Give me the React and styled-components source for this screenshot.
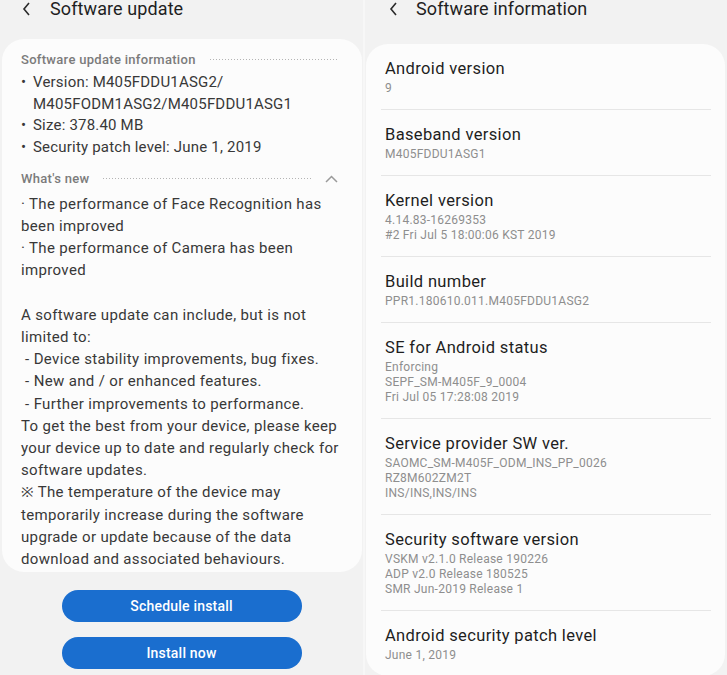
import styled, { createGlobalStyle } from "styled-components"

const GlobalStyle = createGlobalStyle`
  html, body {
    margin: 0;
    padding: 0;
    background: #f1f1f1;
    font-family: Roboto, "Noto Sans", "Liberation Sans", sans-serif;
  }
`

const Page = styled.main`
  display: grid;
  grid-template-columns: 363px 1fr;
  gap: 2px;
  width: 727px;
  height: 675px;
  overflow: hidden;
  background: #f7f7f7;
`

const Panel = styled.section`
  display: flex;
  flex-direction: column;
  background: #f2f2f2;
  overflow: hidden;
`

const Header = styled.header`
  display: flex;
  align-items: center;
  height: 18px;
  padding-left: ${(p) => p.$pad}px;
  gap: ${(p) => p.$gap}px;
  font-size: 18px;
  color: #1f1f1f;
  line-height: 18px;
  letter-spacing: 0.1px;
`

const BackIcon = () => (
  <svg width="9" height="14" viewBox="0 0 9 14">
    <polyline points="7,1 2,7 7,13" fill="none" stroke="#2a2a2a" strokeWidth="1.6" />
  </svg>
)

const UpdateCard = styled.div`
  margin: 21px 1px 0 2px;
  background: #fcfcfc;
  border-radius: 22px;
  padding: 10px 24px 2px 19px;
  color: #383838;
`

const SectionHead = styled.div`
  display: flex;
  align-items: center;
  gap: 14px;
  height: 20px;
  font-size: 13px;
  font-weight: 500;
  letter-spacing: 0.3px;
  color: #7b7b7b;
  margin-top: ${(p) => p.$top || 0}px;
`

const Dots = styled.span`
  flex: 1;
  height: 1px;
  background-image: linear-gradient(to right, #b4b4b4 1px, transparent 1px);
  background-size: 3px 1px;
  background-repeat: repeat-x;
`

const Chevron = () => (
  <svg width="13" height="8" viewBox="0 0 13 8">
    <polyline points="1,7 6.5,1.5 12,7" fill="none" stroke="#9a9a9a" strokeWidth="1.5" />
  </svg>
)

const BulletList = styled.ul`
  list-style: none;
  margin: 3px 0 0;
  padding: 0;
  font-size: 15px;
  line-height: 21.7px;
  letter-spacing: 0.2px;

  li {
    display: flex;
    gap: 6px;
  }
  li::before {
    content: "•";
    width: 6px;
  }
`

const Body = styled.div`
  margin: 4px -20px 0 0;
  font-size: 15px;
  line-height: 22.2px;
  letter-spacing: 0.35px;
  white-space: pre;
`

const Buttons = styled.div`
  display: flex;
  flex-direction: column;
  align-items: center;
  gap: 15px;
  margin-top: 18px;
`

const Pill = styled.button`
  width: 240px;
  height: 32px;
  border: none;
  border-radius: 16px;
  background: #1a6ecf;
  color: #fff;
  font-family: inherit;
  font-size: 14px;
  font-weight: 500;
  letter-spacing: 0.2px;
`

const InfoCard = styled.div`
  margin: 26px 2px 0 1px;
  background: #fcfcfc;
  border-radius: 22px;
  padding: 0 14px 0 15px;
  flex: 1;
`

const Row = styled.div`
  padding: 13px 4px 13px;
  border-bottom: ${(p) => (p.$last ? "none" : "1px solid #e6e6e6")};
`

const Title = styled.div`
  font-size: 16.5px;
  line-height: 24px;
  letter-spacing: 0.35px;
  color: #1e1e1e;
`

const Sub = styled.div`
  font-size: 12px;
  line-height: 15px;
  letter-spacing: 0.25px;
  color: #8e8e8e;
`

const info = [
  ["Android version", ["9"]],
  ["Baseband version", ["M405FDDU1ASG1"]],
  ["Kernel version", ["4.14.83-16269353", "#2 Fri Jul 5 18:00:06 KST 2019"]],
  ["Build number", ["PPR1.180610.011.M405FDDU1ASG2"]],
  ["SE for Android status", ["Enforcing", "SEPF_SM-M405F_9_0004", "Fri Jul 05 17:28:08 2019"]],
  ["Service provider SW ver.", ["SAOMC_SM-M405F_ODM_INS_PP_0026", "RZ8M602ZM2T", "INS/INS,INS/INS"]],
  ["Security software version", ["VSKM v2.1.0 Release 190226", "ADP v2.0 Release 180525", "SMR Jun-2019 Release 1"]],
  ["Android security patch level", ["June 1, 2019"]],
]

const whatsNew = `· The performance of Face Recognition has
been improved
· The performance of Camera has been
improved

A software update can include, but is not
limited to:
 - Device stability improvements, bug fixes.
 - New and / or enhanced features.
 - Further improvements to performance.
To get the best from your device, please keep
your device up to date and regularly check for
software updates.
※ The temperature of the device may
temporarily increase during the software
upgrade or update because of the data
download and associated behaviours.`

const App = () => {
  return (
    <Page>
      <GlobalStyle />
      <Panel>
        <Header $pad={22} $gap={19}>
          <BackIcon />
          Software update
        </Header>
        <UpdateCard>
          <SectionHead>
            Software update information
            <Dots />
          </SectionHead>
          <BulletList>
            <li>
              <span>
                Version: M405FDDU1ASG2/
                <br />
                M405FODM1ASG2/M405FDDU1ASG1
              </span>
            </li>
            <li>Size: 378.40 MB</li>
            <li>Security patch level: June 1, 2019</li>
          </BulletList>
          <SectionHead $top={10}>
            What's new
            <Dots />
            <Chevron />
          </SectionHead>
          <Body>{whatsNew}</Body>
        </UpdateCard>
        <Buttons>
          <Pill>Schedule install</Pill>
          <Pill>Install now</Pill>
        </Buttons>
      </Panel>
      <Panel>
        <Header $pad={24} $gap={18}>
          <BackIcon />
          Software information
        </Header>
        <InfoCard>
          {info.map(([title, lines], i) => (
            <Row key={title} $last={i === info.length - 1}>
              <Title>{title}</Title>
              {lines.map((l) => (
                <Sub key={l}>{l}</Sub>
              ))}
            </Row>
          ))}
        </InfoCard>
      </Panel>
    </Page>
  )
}

export default App
